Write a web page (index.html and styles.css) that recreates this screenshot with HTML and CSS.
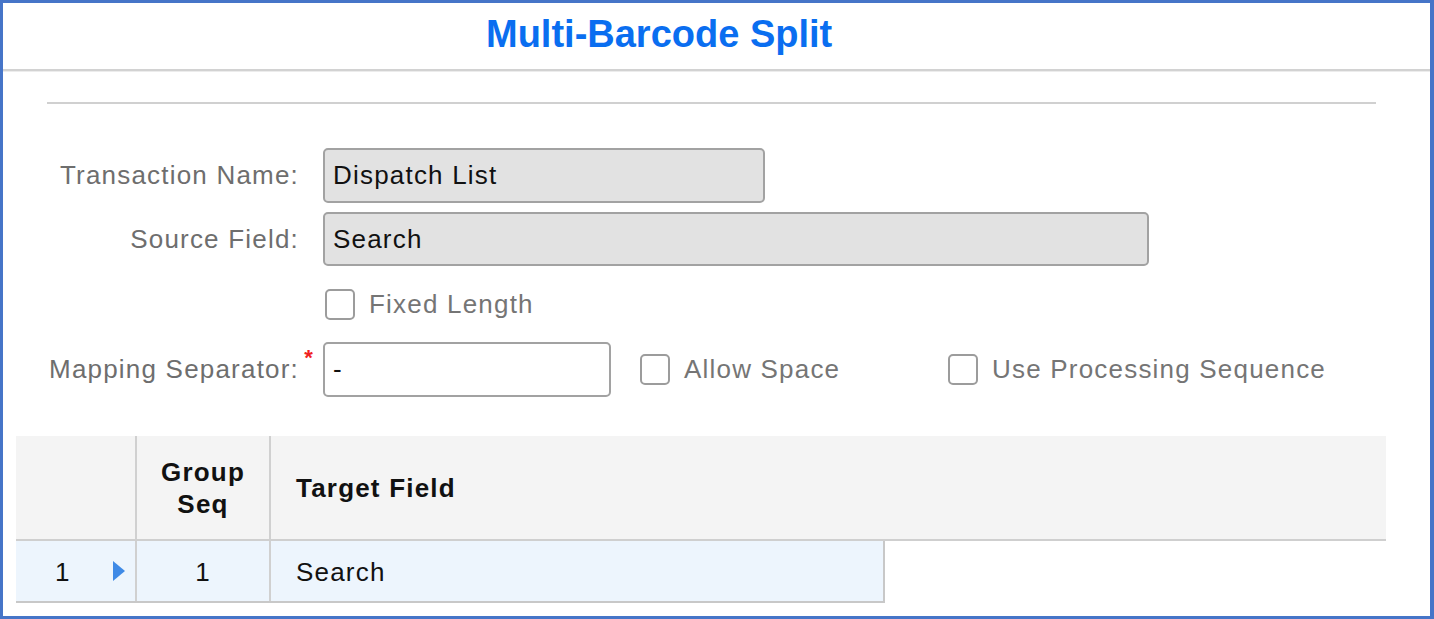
FILE: index.html
```html
<!DOCTYPE html>
<html>
<head>
<meta charset="utf-8">
<link rel="stylesheet" href="styles.css">
</head>
<body>
<div class="frame">
  <div class="header"><h1 class="title">Multi-Barcode Split</h1></div>
  <div class="divider"></div>
  <div class="form">
    <div class="row r1">
      <div class="label">Transaction Name:</div>
      <div class="input readonly w-short">Dispatch List</div>
    </div>
    <div class="row r2">
      <div class="label">Source Field:</div>
      <div class="input readonly w-long">Search</div>
    </div>
    <div class="row r3">
      <div class="label"></div>
      <label class="check fixed"><span class="box"></span><span class="check-text">Fixed Length</span></label>
    </div>
    <div class="row r4">
      <div class="label"><span class="req-wrap">Mapping Separator:<span class="req">*</span></span></div>
      <div class="input w-sep">-</div>
      <label class="check allow"><span class="box"></span><span class="check-text">Allow Space</span></label>
      <label class="check"><span class="box"></span><span class="check-text">Use Processing Sequence</span></label>
    </div>
  </div>
  <div class="grid">
    <div class="grid-head">
      <div class="cell c1"></div>
      <div class="cell c2 center">Group<br>Seq</div>
      <div class="cell c3">Target Field</div>
    </div>
    <div class="grid-row">
      <div class="cell c1 rownum"><span class="num">1</span><span class="arrow"></span></div>
      <div class="cell c2 center">1</div>
      <div class="cell c3">Search</div>
    </div>
  </div>
</div>
</body>
</html>
```
FILE: styles.css
```css
html, body {
  margin: 0;
  padding: 0;
  background: #ffffff;
}
body {
  font-family: "Liberation Sans", Arial, sans-serif;
}
.frame {
  box-sizing: border-box;
  width: 1434px;
  height: 619px;
  border: 3px solid #4675c8;
  border-right-width: 4px;
  display: flex;
  flex-direction: column;
  overflow: hidden;
}
.header {
  height: 68px;
  flex: none;
  box-sizing: border-box;
  padding: 9px 0 0 483px;
  border-bottom: 2px solid #d2d2d2;
  box-shadow: 0 1px 0 #ececec;
}
.title {
  margin: 0;
  font-size: 38px;
  line-height: 44px;
  font-weight: bold;
  color: #0a6ef0;
}
.divider {
  flex: none;
  margin: 31px 54px 0 44px;
  height: 2px;
  background: #d0d0d0;
}
.form {
  margin: 44px 0 0 44px;
  display: flex;
  flex-direction: column;
  font-size: 26px;
  letter-spacing: 1.2px;
}
.row {
  display: flex;
  align-items: center;
  column-gap: 24px;
}
.r1 { height: 55px; }
.r2 { height: 54px; margin-top: 9px; }
.r3 { height: 76px; }
.r4 { height: 55px; }
.label {
  width: 252px;
  flex: none;
  display: flex;
  justify-content: flex-end;
  color: #6e6e6e;
  white-space: nowrap;
}
.req-wrap {
  position: relative;
}
.req {
  position: absolute;
  right: -15px;
  top: -9px;
  color: #f02020;
  font-size: 22px;
  font-weight: bold;
}
.input {
  box-sizing: border-box;
  height: 100%;
  border: 2px solid #a2a2a2;
  border-radius: 5px;
  padding: 0 8px;
  display: flex;
  align-items: center;
  color: #111111;
  background: #ffffff;
}
.input.readonly {
  background: #e2e2e2;
}
.w-short { width: 442px; }
.w-long { width: 826px; }
.w-sep { width: 288px; }
.check {
  display: flex;
  align-items: center;
  color: #757575;
  white-space: nowrap;
}
.check.fixed { margin-left: 2px; }
.check.allow { margin-left: 5px; width: 308px; }
.box {
  box-sizing: border-box;
  width: 30px;
  height: 31px;
  border: 2px solid #9c9c9c;
  border-radius: 5px;
  background: #ffffff;
  margin-right: 14px;
  flex: none;
}
.r4 .check + .check { margin-left: -24px; }
.grid {
  margin: 39px 0 0 13px;
  width: 1370px;
  font-size: 26px;
  letter-spacing: 1.2px;
  color: #111111;
}
.grid-head {
  display: flex;
  height: 105px;
  background: #f4f4f4;
  border-bottom: 2px solid #cfcfcf;
  box-sizing: border-box;
  font-weight: bold;
  line-height: 32px;
}
.grid-row {
  display: flex;
  width: 869px;
  height: 62px;
  box-sizing: border-box;
  background: #edf5fd;
  border-bottom: 2px solid #c8c8c8;
  border-right: 2px solid #c8c8c8;
}
.cell {
  display: flex;
  align-items: center;
  box-sizing: border-box;
}
.c1 { width: 121px; border-right: 2px solid #d0d0d0; }
.c2 { width: 134px; border-right: 2px solid #d0d0d0; }
.c3 { flex: 1; padding-left: 25px; }
.center { justify-content: center; text-align: center; }
.rownum {
  padding-left: 39px;
  padding-right: 10px;
  justify-content: space-between;
  padding-top: 3px;
}
.grid-row .cell { padding-top: 3px; }
.grid-row .c3 { padding-left: 25px; }
.arrow {
  width: 0;
  height: 0;
  border-top: 10px solid transparent;
  border-bottom: 10px solid transparent;
  border-left: 12px solid #3f8ae6;
  margin-top: -3px;
}
```
